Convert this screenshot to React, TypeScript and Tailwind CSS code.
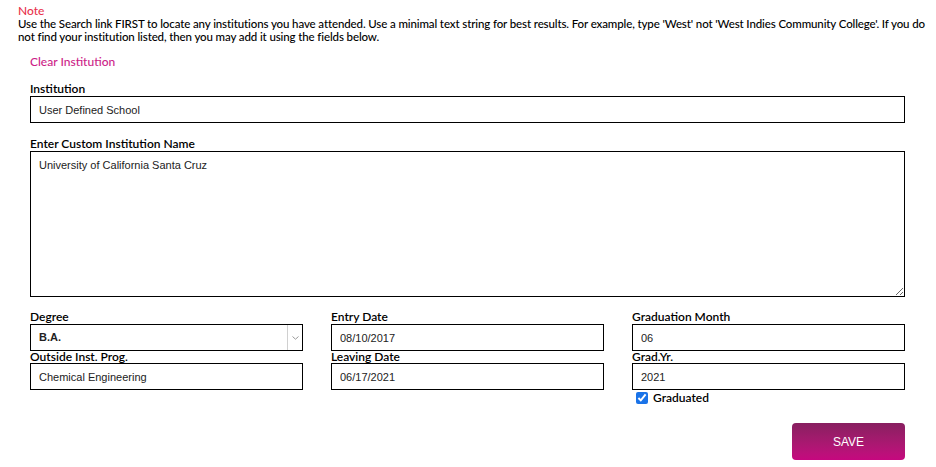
import React, { useState } from "react";

const labelCls = "block text-[12px] font-semibold text-black leading-[14px]";
const inputCls =
  "block w-full h-[27px] border border-black bg-white px-[8px] text-[11px] text-[#222] outline-none font-['Liberation_Sans',Arial,sans-serif]";

const Field = ({
  label,
  value,
  tight = false,
}: {
  label: string;
  value: string;
  tight?: boolean;
}) => (
  <div>
    <label className={tight ? labelCls.replace("leading-[14px]", "leading-[12px]") : labelCls}>
      {label}
    </label>
    <input type="text" defaultValue={value} className={inputCls} />
  </div>
);

export default function App() {
  const [graduated, setGraduated] = useState(true);

  return (
    <div className="w-[936px] h-[467px] bg-white font-['Lato',sans-serif] text-black overflow-hidden">
      <div className="pl-[18px] pt-[4px]">
        <div className="text-[12px] font-medium text-[#e8324c] leading-[14px]">Note</div>
        <p className="whitespace-nowrap text-[11.5px] font-medium leading-[12.5px] tracking-[-0.12px]">
          Use the Search link FIRST to locate any institutions you have attended. Use a minimal text
          string for best results. For example, type 'West' not 'West Indies Community College'. If you
          do
          <br />
          not find your institution listed, then you may add it using the fields below.
        </p>
      </div>

      <div className="pl-[30px] pr-[31px]">
        <div className="mt-[12px] text-[12px] font-medium text-[#cc1d87] leading-[14px]">
          Clear Institution
        </div>

        <div className="mt-[13px]">
          <label className={labelCls}>Institution</label>
          <input type="text" defaultValue="User Defined School" className={inputCls} />
        </div>

        <div className="mt-[14px]">
          <label className={labelCls}>Enter Custom Institution Name</label>
          <textarea
            defaultValue="University of California Santa Cruz"
            className="block w-full h-[146px] border border-black bg-white px-[8px] py-[5px] text-[11px] text-[#222] outline-none font-['Liberation_Sans',Arial,sans-serif]"
          />
        </div>

        <div className="mt-[13px] grid grid-cols-3 gap-x-[28px]">
          <div>
            <label className={labelCls}>Degree</label>
            <div className="flex h-[27px] border border-black bg-white">
              <select
                defaultValue="B.A."
                className="flex-1 appearance-none bg-transparent px-[8px] text-[11px] font-bold text-[#222] outline-none font-['Liberation_Sans',Arial,sans-serif]"
              >
                <option>B.A.</option>
                <option>B.S.</option>
                <option>M.A.</option>
              </select>
              <div className="flex w-[15px] items-center justify-center border-l border-[#d0d0d0]">
                <svg width="7" height="4" viewBox="0 0 7 4">
                  <path d="M0.5 0.5 L3.5 3.2 L6.5 0.5" fill="none" stroke="#999" strokeWidth="1" />
                </svg>
              </div>
            </div>
            <Field label="Outside Inst. Prog." value="Chemical Engineering" tight />
          </div>

          <div>
            <Field label="Entry Date" value="08/10/2017" />
            <Field label="Leaving Date" value="06/17/2021" tight />
          </div>

          <div>
            <Field label="Graduation Month" value="06" />
            <Field label="Grad.Yr." value="2021" tight />
            <label className="mt-[1px] ml-[4px] flex items-center gap-[5px] text-[12px] font-semibold leading-[14px]">
              <input
                type="checkbox"
                checked={graduated}
                onChange={(e) => setGraduated(e.target.checked)}
                className="h-[12px] w-[12px] m-0 accent-[#1a73e8]"
              />
              Graduated
            </label>
          </div>
        </div>

        <div className="mt-[18px] flex justify-end">
          <button className="h-[37px] w-[113px] rounded-[4px] bg-gradient-to-b from-[#881f60] to-[#c6077f] text-[12px] text-white font-['Liberation_Sans',Arial,sans-serif]">
            SAVE
          </button>
        </div>
      </div>
    </div>
  );
}
